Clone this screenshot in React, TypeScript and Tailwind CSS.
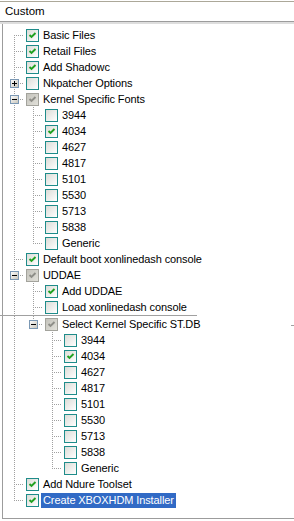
import type { ReactNode } from "react";

type State = "on" | "off" | "mixed";

type Node = {
  label: string;
  state: State;
  open?: boolean;
  children?: Node[];
  selected?: boolean;
  gapBefore?: boolean;
};

const builds = ["3944", "4034", "4627", "4817", "5101", "5530", "5713", "5838", "Generic"];
const buildNodes = (): Node[] =>
  builds.map((b) => ({ label: b, state: b === "4034" ? "on" : "off" }));

const tree: Node[] = [
  { label: "Basic Files", state: "on" },
  { label: "Retail Files", state: "on" },
  { label: "Add Shadowc", state: "on" },
  { label: "Nkpatcher Options", state: "off", open: false, children: [{ label: "x", state: "off" }] },
  { label: "Kernel Specific Fonts", state: "mixed", open: true, children: buildNodes() },
  { label: "Default boot xonlinedash console", state: "on" },
  {
    label: "UDDAE",
    state: "mixed",
    open: true,
    children: [
      { label: "Add UDDAE", state: "on" },
      { label: "Load xonlinedash console", state: "off" },
      { label: "Select Kernel Specific ST.DB", state: "mixed", open: true, gapBefore: true, children: buildNodes() },
    ],
  },
  { label: "Add Ndure Toolset", state: "on" },
  { label: "Create XBOXHDM Installer", state: "on", selected: true },
];

type Row =
  | { kind: "gap"; guides: boolean[] }
  | { kind: "row"; node: Node; guides: boolean[]; last: boolean; first: boolean };

function flatten(nodes: Node[], guides: boolean[], out: Row[]) {
  nodes.forEach((n, i) => {
    const last = i === nodes.length - 1;
    if (n.gapBefore) out.push({ kind: "gap", guides: [...guides, true] });
    out.push({ kind: "row", node: n, guides, last, first: guides.length === 0 && i === 0 });
    if (n.children && n.open) flatten(n.children, [...guides, !last], out);
  });
}

const DOT = "#a0a0a0";

// one 19px column of the tree's dotted guides
function Cell({ h, children }: { h: number; children?: ReactNode }) {
  return (
    <svg width="19" height={h} className="shrink-0 block" shapeRendering="crispEdges">
      {children}
    </svg>
  );
}

function Guide({ on, h = 16 }: { on: boolean; h?: number }) {
  return <Cell h={h}>{on && <line x1="9.5" y1="0" x2="9.5" y2={h} stroke={DOT} strokeDasharray="1 1" />}</Cell>;
}

function Connector({ first, last, expander }: { first: boolean; last: boolean; expander?: "plus" | "minus" }) {
  return (
    <Cell h={16}>
      <line x1="9.5" y1={first ? 8 : 0} x2="9.5" y2={last ? 9 : 16} stroke={DOT} strokeDasharray="1 1" />
      <line x1="11" y1="8.5" x2="19" y2="8.5" stroke={DOT} strokeDasharray="1 1" />
      {expander && (
        <g>
          <defs>
            <linearGradient id="exp" x1="0" y1="0" x2="1" y2="1">
              <stop offset="0" stopColor="#ffffff" />
              <stop offset="1" stopColor="#c6c3b8" />
            </linearGradient>
          </defs>
          <rect x="5.5" y="4.5" width="8" height="8" fill="url(#exp)" stroke="#7b98b4" />
          <line x1="7" y1="8.5" x2="12" y2="8.5" stroke="#000" />
          {expander === "plus" && <line x1="9.5" y1="6" x2="9.5" y2="11" stroke="#000" />}
        </g>
      )}
    </Cell>
  );
}

function Check({ state }: { state: State }) {
  const mixed = state === "mixed";
  return (
    <div
      className={
        mixed
          ? "w-[13px] h-[13px] shrink-0 border border-[#a3a39c] bg-linear-to-br from-[#c4c3bc] to-[#e2e1da]"
          : "w-[13px] h-[13px] shrink-0 border border-[#1f8c8a] bg-linear-to-br from-[#dcdcd7] to-white"
      }
    >
      {state !== "off" && (
        <svg width="11" height="11" className="block">
          <polyline
            points="2.5,5 4.5,7 8.5,3"
            fill="none"
            stroke={mixed ? "#8e8e88" : "#21a121"}
            strokeWidth="1.9"
          />
        </svg>
      )}
    </div>
  );
}

export default function App() {
  const rows: Row[] = [];
  flatten(tree, [], rows);

  return (
    <div className="w-[294px] h-[521px] bg-white overflow-hidden text-[11px] text-black font-['Liberation_Sans',Arial,sans-serif]">
      <div className="mt-px h-[20px] border-t border-[#aca899] flex items-center pl-[5px] text-[11.5px]">Custom</div>
      <div className="h-[3px] border-t border-[#9c9c9c] bg-[#dedede]" />
      <div className="ml-[2px] h-[495px] border-l border-b border-[#9c9c9c] pl-[2px] pt-[3px] tracking-[-0.1px]">
        {rows.map((r, i) => {
          if (r.kind === "gap") {
            return (
              <div key={i} className="relative flex h-px">
                {r.guides.map((g, j) => (
                  <Guide key={j} on={g} h={1} />
                ))}
                <div className="absolute left-[-5px] top-0 w-[197px] h-px bg-[#a0a0a0]" />
              </div>
            );
          }
          const n = r.node;
          const expander = n.children ? (n.open ? "minus" : "plus") : undefined;
          return (
            <div key={i} className="flex items-center h-4">
              {r.guides.map((g, j) => (
                <Guide key={j} on={g} />
              ))}
              <Connector first={r.first} last={r.last} expander={expander} />
              <div className="ml-[2px]">
                <Check state={n.state} />
              </div>
              <span
                className={
                  n.selected
                    ? "ml-[2px] h-[15px] px-[2px] flex items-center bg-[#316ac5] text-white whitespace-nowrap"
                    : "ml-[2px] px-[2px] whitespace-nowrap"
                }
              >
                {n.label}
              </span>
              {n.label === "Select Kernel Specific ST.DB" && (
                <span className="ml-auto mt-[3px] w-[3px] h-px bg-[#a0a0a0]" />
              )}
            </div>
          );
        })}
      </div>
    </div>
  );
}
